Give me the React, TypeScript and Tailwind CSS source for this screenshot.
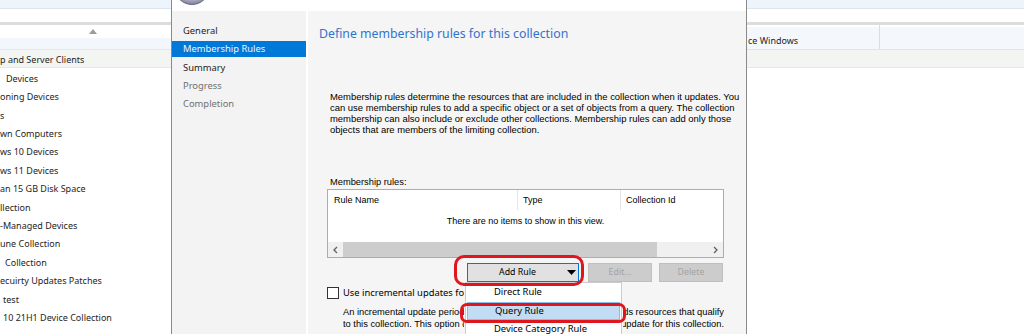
import React from "react";

const leftItems: { t: string; pl?: number; hl?: boolean }[] = [
  { t: "p and Server Clients", hl: true },
  { t: "Devices", pl: 6 },
  { t: "oning Devices" },
  { t: "s" },
  { t: "wn Computers" },
  { t: "ws 10 Devices" },
  { t: "ws 11 Devices" },
  { t: "an 15 GB Disk Space" },
  { t: "llection" },
  { t: "-Managed Devices" },
  { t: "une Collection" },
  { t: "Collection", pl: 5 },
  { t: "ecuirty Updates Patches" },
  { t: "test", pl: 3 },
  { t: "10 21H1 Device Collection", pl: 3 },
];

function PaneTop() {
  return (
    <>
      <div className="h-[9px] shrink-0 bg-[#eef4fb] border-b border-[#dde4ec]" />
      <div className="h-[13px] shrink-0 bg-white" />
      <div className="h-[3px] shrink-0 bg-[#dcdcdc]" />
    </>
  );
}

export default function App() {
  return (
    <div className="flex w-[1024px] h-[334px] overflow-hidden bg-white font-['Noto_Sans',sans-serif] text-[#1e1e1e]">
      {/* Left background pane */}
      <div className="w-[171px] shrink-0 flex flex-col overflow-hidden">
        <PaneTop />
        <div className="h-[25px] shrink-0 bg-gradient-to-b from-white from-55% to-[#f3f7fd] to-55% border-b border-[#e3e6ea] pl-[89px] pt-[4px]">
          <svg width="8" height="5" viewBox="0 0 8 5">
            <polygon points="0,5 4,0 8,5" fill="#9c9c9c" />
          </svg>
        </div>
        {leftItems.map((it, i) => (
          <div
            key={i}
            className={
              it.hl
                ? "h-[18.4px] shrink-0 flex items-center pt-[2px] whitespace-nowrap text-[9px] bg-[#f2f5f1] border-b border-[#e6eae6]"
                : "h-[18.4px] shrink-0 flex items-center pt-[2px] whitespace-nowrap text-[9px]"
            }
            style={{ paddingLeft: it.pl ?? 0 }}
          >
            {it.t}
          </div>
        ))}
      </div>

      {/* Dialog */}
      <div className="w-[576px] shrink-0 border-x border-[#8a8a8a] flex flex-col bg-[#f5f5f5]">
        <div className="h-[11px] shrink-0 bg-white relative overflow-hidden">
          <svg className="absolute left-[1px] top-[-31px]" width="38" height="38" viewBox="0 0 38 38">
            <defs>
              <radialGradient id="lg" cx="50%" cy="35%" r="65%">
                <stop offset="0" stopColor="#f2f2f7" />
                <stop offset="0.7" stopColor="#c4c4d4" />
                <stop offset="1" stopColor="#7e7e9a" />
              </radialGradient>
            </defs>
            <circle cx="19" cy="18" r="17.5" fill="url(#lg)" stroke="#6a6a86" strokeWidth="1" />
          </svg>
        </div>
        <div className="flex flex-1 min-h-0">
          {/* Nav */}
          <div className="w-[134px] shrink-0 bg-[#f3f3f3] pt-[11px] text-[9.4px] whitespace-nowrap">
            <div className="h-[18px] flex items-center pl-[11px] text-[#1e1e1e]">General</div>
            <div className="my-[1px] h-[16px] flex items-center pl-[11px] bg-[#0078d7] text-[#eef5fc]">Membership Rules</div>
            <div className="h-[19px] flex items-center pl-[11px] pt-[1px] text-[#1e1e1e]">Summary</div>
            <div className="h-[18px] flex items-center pl-[11px] pt-[1px] text-[#707070]">Progress</div>
            <div className="h-[18px] flex items-center pl-[11px] text-[#707070]">Completion</div>
          </div>
          <div className="w-[2px] shrink-0 bg-white" />
          {/* Content */}
          <div className="flex-1 flex flex-col pl-[11px]">
            <div className="mt-[15px] h-[16px] leading-[16px] text-[12.3px] text-[#2f74cf] whitespace-nowrap">
              Define membership rules for this collection
            </div>
            <div className="ml-[11px] mt-[49px] font-['Liberation_Sans',Arial,sans-serif] text-[9.45px] leading-[11px] text-black whitespace-nowrap">
              <div>Membership rules determine the resources that are included in the collection when it updates. You</div>
              <div>can use membership rules to add a specific object or a set of objects from a query. The collection</div>
              <div>membership can also include or exclude other collections. Membership rules can add only those</div>
              <div>objects that are members of the limiting collection.</div>
            </div>
            <div className="ml-[11px] mt-[41px] h-[11px] leading-[11px] pt-[1px] font-['Liberation_Sans',Arial,sans-serif] text-[9.3px] text-black">
              Membership rules:
            </div>
            {/* List view */}
            <div className="ml-[8px] mt-[2px] w-[397px] h-[69px] border border-[#adadad] bg-white flex flex-col font-['Liberation_Sans',Arial,sans-serif] text-[9px] text-black">
              <div className="flex h-[20px] shrink-0">
                <div className="w-[189px] pl-[6px] pt-[2px] flex items-center">Rule Name</div>
                <div className="w-px bg-[#e5e5e5]" />
                <div className="w-[102px] pl-[5px] pt-[2px] flex items-center">Type</div>
                <div className="w-px bg-[#e5e5e5]" />
                <div className="flex-1 pl-[5px] pt-[2px] flex items-center">Collection Id</div>
              </div>
              <div className="h-[20px] shrink-0 leading-[20px] pt-[1px] text-center">There are no items to show in this view.</div>
              <div className="flex-1" />
              <div className="h-[15px] shrink-0 flex">
                <div className="w-[15px] bg-[#f0f0f0] flex items-center justify-center">
                  <svg width="5" height="8" viewBox="0 0 5 8">
                    <polyline points="4,1 1,4 4,7" fill="none" stroke="#606060" strokeWidth="1.3" />
                  </svg>
                </div>
                <div className="w-[314px] bg-[#cdcdcd]" />
                <div className="flex-1 bg-[#f0f0f0]" />
                <div className="w-[15px] bg-[#f0f0f0] flex items-center justify-center">
                  <svg width="5" height="8" viewBox="0 0 5 8">
                    <polyline points="1,1 4,4 1,7" fill="none" stroke="#606060" strokeWidth="1.3" />
                  </svg>
                </div>
              </div>
            </div>
            {/* Buttons */}
            <div className="relative ml-[8px] mt-[5px] h-[19px] flex text-[8.8px]">
              <div className="ml-[140px] w-[112px] h-[19px] border border-[#0078d7] bg-[#e1e1e1] flex items-center text-black">
                <span className="flex-1 text-center">Add Rule</span>
                <svg className="mr-[2px]" width="9" height="5" viewBox="0 0 9 5">
                  <polygon points="0,0 9,0 4.5,5" fill="#000" />
                </svg>
              </div>
              <div className="ml-[9px] w-[64px] h-[19px] border border-[#bfbfbf] bg-[#cccccc] flex items-center justify-center text-[#a3a3a3]">
                Edit...
              </div>
              <div className="ml-[7px] w-[64px] h-[19px] border border-[#bfbfbf] bg-[#cccccc] flex items-center justify-center text-[#a3a3a3]">
                Delete
              </div>

              {/* Dropdown menu */}
              <div className="absolute left-[138px] top-[19px] w-[157px] h-[70px] bg-white border border-[#cccccc] z-10 text-[9.4px] text-black flex flex-col">
                <div className="h-[18.5px] flex items-center pl-[28px]">Direct Rule</div>
                <div className="h-[18.5px] mx-[1px] flex items-center pl-[27px] bg-[#c1dcf3] border border-[#8cbde9]">Query Rule</div>
                <div className="h-[18.5px] flex items-center pl-[28px] whitespace-nowrap">Device Category Rule</div>
              </div>

              {/* Red annotations */}
              <div className="absolute left-[127px] top-[-8px] w-[130px] h-[31px] border-[3px] border-[#e0161e] rounded-[10px] z-20" />
              <div className="absolute left-[133px] top-[40px] w-[166px] h-[20px] border-[3px] border-[#e0161e] rounded-[7px] z-20" />
            </div>
            {/* Checkbox */}
            <div className="ml-[8px] mt-[5px] h-[12px] flex items-center">
              <div className="w-[12px] h-[12px] border border-[#333333] bg-white" />
              <span className="ml-[4px] w-[121px] overflow-hidden text-[9.4px] text-black whitespace-nowrap">Use incremental updates for this collection</span>
            </div>
            <div className="ml-[24px] mt-[7px] w-[381px] font-['Liberation_Sans',Arial,sans-serif] text-[9.3px] leading-[12px] text-black whitespace-nowrap">
              <div className="flex justify-between">
                <span className="w-[121px] overflow-hidden">An incremental update periodically evaluates</span>
                <span className="w-[101px] overflow-hidden flex justify-end">
                  <span className="shrink-0">and adds resources that qualify</span>
                </span>
              </div>
              <div className="flex justify-between">
                <span className="w-[121px] overflow-hidden">to this collection. This option does not</span>
                <span className="w-[101px] overflow-hidden flex justify-end">
                  <span className="shrink-0">require a full update for this collection.</span>
                </span>
              </div>
            </div>
          </div>
        </div>
      </div>

      {/* Right background pane */}
      <div className="flex-1 flex flex-col overflow-hidden">
        <PaneTop />
        <div className="h-[25px] shrink-0 flex bg-gradient-to-b from-white from-10% to-[#f4f8fd] to-10% border-b border-[#e0e3e8]">
          <div className="w-[132px] pl-[1px] pt-[10px] leading-[12px] text-[9px] whitespace-nowrap">ce Windows</div>
          <div className="w-px bg-[#dcdcdc]" />
          <div className="flex-1" />
        </div>
        <div className="h-[18px] shrink-0 bg-[#f2f5f1] border-b border-[#e6eae6]" />
      </div>
    </div>
  );
}
